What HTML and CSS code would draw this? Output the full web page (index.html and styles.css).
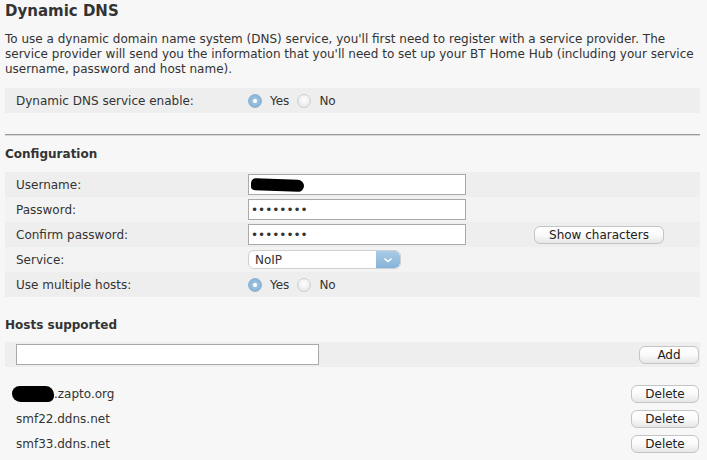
FILE: index.html
```html
<!DOCTYPE html>
<html>
<head>
<meta charset="utf-8">
<title>Dynamic DNS</title>
<link rel="stylesheet" href="styles.css">
</head>
<body>
<div class="page">
  <h1 class="title">Dynamic DNS</h1>
  <p class="intro">To use a dynamic domain name system (DNS) service, you'll first need to register with a service provider. The service provider will send you the information that you'll need to set up your BT Home Hub (including your service username, password and host name).</p>

  <div class="row shade">
    <div class="label">Dynamic DNS service enable:</div>
    <div class="field">
      <span class="radio on"></span><span class="rlabel">Yes</span>
      <span class="radio"></span><span class="rlabel">No</span>
    </div>
  </div>

  <div class="sep"></div>

  <h2 class="sub">Configuration</h2>
  <div class="rows">
    <div class="row shade">
      <div class="label">Username:</div>
      <div class="field"><div class="input"><span class="blot user"></span></div></div>
    </div>
    <div class="row light">
      <div class="label">Password:</div>
      <div class="field"><div class="input pw">&#8226;&#8226;&#8226;&#8226;&#8226;&#8226;&#8226;&#8226;</div></div>
    </div>
    <div class="row shade">
      <div class="label">Confirm password:</div>
      <div class="field"><div class="input pw">&#8226;&#8226;&#8226;&#8226;&#8226;&#8226;&#8226;&#8226;</div></div>
      <div class="btn show">Show characters</div>
    </div>
    <div class="row light">
      <div class="label">Service:</div>
      <div class="field">
        <div class="select"><span class="sval">NoIP</span><span class="arrow"><svg width="10" height="6" viewBox="0 0 10 6"><path d="M1.5 1.5 L5 4.5 L8.5 1.5" fill="none" stroke="#fff" stroke-width="1.6"/></svg></span></div>
      </div>
    </div>
    <div class="row shade">
      <div class="label">Use multiple hosts:</div>
      <div class="field">
        <span class="radio on"></span><span class="rlabel">Yes</span>
        <span class="radio"></span><span class="rlabel">No</span>
      </div>
    </div>
  </div>

  <h2 class="sub hosts">Hosts supported</h2>
  <div class="row shade hostadd">
    <div class="input wide"></div>
    <div class="btn add">Add</div>
  </div>

  <div class="hostlist">
    <div class="hrow"><span class="hname"><span class="blot host"></span>.zapto.org</span><div class="btn del">Delete</div></div>
    <div class="hrow"><span class="hname">smf22.ddns.net</span><div class="btn del">Delete</div></div>
    <div class="hrow"><span class="hname">smf33.ddns.net</span><div class="btn del">Delete</div></div>
  </div>
</div>
</body>
</html>
```

FILE: styles.css
```css
html, body {
  margin: 0;
  padding: 0;
  background: #f7f7f7;
}
body {
  font-family: "DejaVu Sans", Verdana, sans-serif;
  font-size: 12px;
  color: #333;
}
.page {
  width: 695px;
  padding-left: 5px;
}
.title {
  margin: 0;
  padding-top: 2px;
  font-size: 15px;
  line-height: 18px;
  font-weight: bold;
  color: #333;
}
.intro {
  margin: 12px 0 0 0;
  line-height: 15px;
  font-size: 12px;
}
.row {
  display: flex;
  align-items: center;
  height: 25px;
}
.shade { background: #eeeeee; }
.light { background: #f3f3f3; }
.row > .label {
  width: 232px;
  padding-left: 11px;
  flex: none;
}
.field {
  display: flex;
  align-items: center;
  width: 286px;
  flex: none;
}
.intro + .row { margin-top: 11px; }
.sep {
  margin-top: 21px;
  height: 1px;
  background: #999;
  border-bottom: 1px solid #d8d8d8;
}
.sub {
  margin: 10px 0 0 0;
  font-size: 12px;
  line-height: 16px;
  font-weight: bold;
}
.rows { margin-top: 10px; }
.radio {
  width: 14px;
  height: 14px;
  border-radius: 50%;
  box-sizing: border-box;
  border: 1px solid #d0d0d0;
  background: radial-gradient(circle at 50% 40%, #ffffff 0%, #f0f0f0 50%, #dcdcdc 100%);
}
.radio.on {
  border-color: #8fb4d4;
  background: radial-gradient(circle at 50% 50%, #ffffff 0%, #ffffff 18%, #9cc2e0 30%, #79a9d1 100%);
}
.rlabel {
  margin-left: 8px;
  margin-right: 8px;
}
.input {
  width: 218px;
  height: 21px;
  box-sizing: border-box;
  background: #fff;
  border: 1px solid #a9a9a9;
  display: flex;
  align-items: center;
  padding-left: 2px;
}
.pw {
  font-size: 12px;
  color: #333;
}
.blot {
  display: inline-block;
  background: #000;
}
.blot.user {
  width: 53px;
  height: 12px;
  border-radius: 6px 8px 7px 5px;
  transform: rotate(2deg);
}
.btn {
  box-sizing: border-box;
  height: 18px;
  border: 1px solid #c4c4c4;
  border-radius: 6px;
  background: linear-gradient(#ffffff 0%, #fafafa 50%, #e6e6e6 100%);
  display: flex;
  align-items: center;
  justify-content: center;
  font-size: 12px;
  color: #222;
  flex: none;
}
.show {
  width: 130px;
}
.select {
  width: 153px;
  height: 19px;
  box-sizing: border-box;
  border: 1px solid #d0d0d0;
  border-radius: 6px;
  background: #fff;
  display: flex;
  align-items: stretch;
  overflow: hidden;
}
.sval {
  flex: 1;
  padding-left: 6px;
  display: flex;
  align-items: center;
}
.arrow {
  width: 24px;
  background: linear-gradient(#a9cbe6, #86b3d9);
  display: flex;
  align-items: center;
  justify-content: center;
  border-radius: 0 5px 5px 0;
}
.hosts { margin-top: 20px; }
.hostadd {
  margin-top: 9px;
  padding-left: 11px;
  justify-content: space-between;
  padding-right: 1px;
}
.input.wide { width: 303px; }
.add { width: 60px; }
.hostlist { margin-top: 14px; }
.hrow {
  height: 25px;
  display: flex;
  align-items: center;
  justify-content: space-between;
  padding-left: 11px;
  padding-right: 1px;
}
.hname {
  display: flex;
  align-items: center;
}
.blot.host {
  width: 42px;
  height: 16px;
  border-radius: 8px 9px 6px 9px;
  margin-left: -4px;
}
.del { width: 68px; }
```
